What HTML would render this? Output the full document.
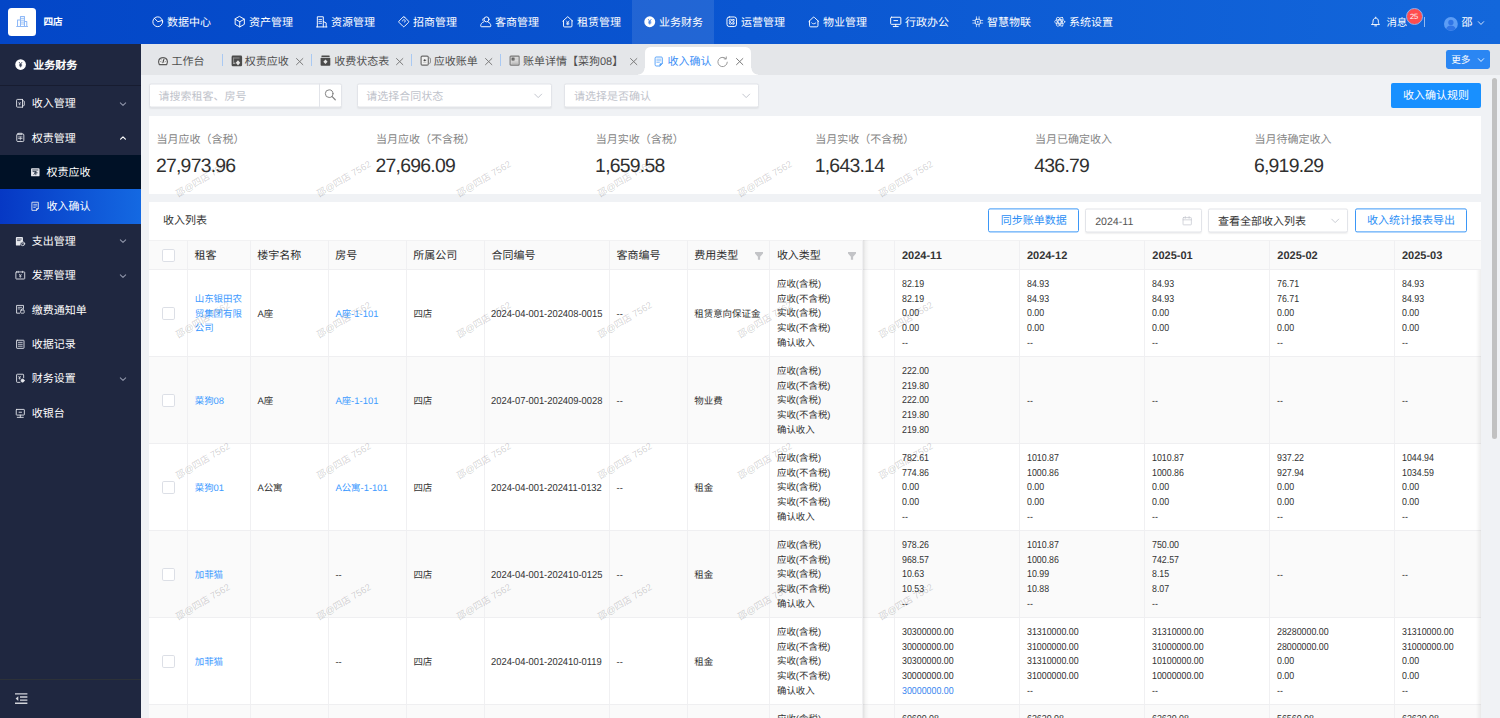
<!DOCTYPE html>
<html lang="zh-CN"><head><meta charset="utf-8"><title>收入确认</title>
<style>
*{box-sizing:border-box;margin:0;padding:0}
html,body{width:1500px;height:718px;overflow:hidden}
body{position:relative;background:#f0f2f5;font-family:"Liberation Sans",sans-serif;font-size:11px;color:#333;text-rendering:geometricPrecision}
svg{display:block;overflow:visible}
.abs{position:absolute}
#hd{position:absolute;left:0;top:0;width:1500px;height:44px;background:linear-gradient(90deg,#0346c7 0%,#0a56d1 50%,#1367db 100%);color:#fff}
#logo{position:absolute;left:8px;top:8px;width:28px;height:28px;background:#fff;border-radius:3.5px;color:#8fb9f7}
#logo svg{position:absolute;left:6.6px;top:7.1px}
#brand{position:absolute;left:43.6px;top:0;line-height:46.2px;font-size:9.6px;font-weight:bold;letter-spacing:-.2px}
.nv{position:absolute;top:0;height:44px;width:82px;line-height:46.8px;font-size:11px;white-space:nowrap}
.nv svg{position:absolute;left:12.3px;top:16.1px}
.nv span{position:absolute;left:27.2px;top:0}
.nv.on{background:rgba(255,255,255,.1)}
#sb{position:absolute;left:0;top:44px;width:140.8px;height:674px;background:#1f2740;color:#fff}
#sbt{position:absolute;left:0;top:0;width:100%;height:41.5px;border-bottom:1px solid #171c30;font-weight:bold;line-height:44.5px}
#sbt svg{position:absolute;left:14.8px;top:15.4px}
#sbt span{position:absolute;left:33.2px}
.mi{position:absolute;left:0;width:100%;height:34.4px;line-height:37.4px;white-space:nowrap}
.mi svg.i{position:absolute;left:14.8px;top:11.8px;color:#e6e8ee}
.mi span{position:absolute;left:31.8px;top:0}
.mi svg.cv{position:absolute;left:119.4px;top:13.4px;color:#8f95a9;stroke-width:1.600}
.mi.sub{background:#001126}
.mi.sub svg.i{left:30px}
.mi.sub span{left:46.6px}
.mi.act{background:linear-gradient(90deg,#0638c4 0%,#1469e2 100%)}
#sbf{position:absolute;left:0;top:635.3px;width:100%;height:40px;border-top:1px solid #2c3138}
#sbf svg{position:absolute;left:15px;top:12.7px;color:#d2d4da}
#tabs{position:absolute;left:140.8px;top:44px;width:1359.2px;height:30.8px;background:#e4e6e9;color:#505050}
.tb{position:absolute;top:0;height:30.8px;line-height:37.9px;white-space:nowrap;font-size:11px}
.tb svg{position:absolute}
.sep{position:absolute;top:9.8px;width:1px;height:12.4px;background:#a9c9f3}
#tabact{position:absolute;left:504px;top:2.9px;width:106.3px;height:27.9px;background:#fff;border-radius:5.5px 5.5px 0 0}
#tabact:before,#tabact:after{content:"";position:absolute;bottom:0;width:6.5px;height:6.5px}
#tabact:before{left:-6.5px;background:radial-gradient(circle at 0 0,rgba(255,255,255,0) 6.1px,#fff 6.9px)}
#tabact:after{right:-6.5px;background:radial-gradient(circle at 100% 0,rgba(255,255,255,0) 6.1px,#fff 6.9px)}
#more{position:absolute;left:1446px;top:50.2px;width:44px;height:18.6px;background:#2a86f3;border-radius:2.4px;color:#fff;font-size:9.6px;line-height:22.6px}
#more span{position:absolute;left:5.2px;top:0}
#more svg{position:absolute;left:30.8px;top:5.6px}
.inp{position:absolute;top:83px;height:24px;transform:translateY(.5px);background:#fff;border:1px solid #e2e4e9;border-radius:2px;box-shadow:0 1px 1.5px rgba(0,0,0,.06);line-height:24.8px;font-size:11px;color:#bfc3cb;white-space:nowrap}
.inp span{position:absolute;left:8.6px;top:0}
.inp svg{position:absolute;color:#b9bdc6}
.btnp{position:absolute;background:#1890ff;color:#fff;border-radius:2px;text-align:center;white-space:nowrap;font-size:11px}
.btno{position:absolute;background:#fff;color:#2b8ef5;border:1px solid #3b97f7;border-radius:2px;text-align:center;white-space:nowrap;font-size:11px;line-height:24.8px;height:24px;top:208px;transform:translateY(.4px)}
.card{position:absolute;left:148.8px;width:1332.4px;background:#fff}
.st{position:absolute;top:0}
.st .l{position:absolute;left:0;top:17.4px;font-size:11px;color:#858585;white-space:nowrap;line-height:14px}
.st .v{position:absolute;left:-.6px;top:38.5px;font-size:19.4px;color:#303030;white-space:nowrap;line-height:24px;letter-spacing:-.75px}
#tbl{position:absolute;left:148.8px;top:239.5px;width:1332.4px;height:480px;overflow:hidden;font-size:9.45px;color:#333}
.r{position:absolute;left:0;width:1332.4px;height:87px;background:#fff}
.r.s{background:#fafafa}
.r.h{height:30.4px;background:#fafafa;font-size:11px;font-weight:500;color:#2e2e2e}
.r.h .c.d{font-weight:bold;color:#333;padding-left:6.8px}
.c{position:absolute;top:0;height:100%;border-right:1px solid #f0f0f2;border-bottom:1px solid #efeff1;white-space:nowrap}
.r.h .c{line-height:30.2px;padding-left:6.4px;border-bottom-color:#efeff1;border-top:1px solid #f2f2f3}
.c .m{position:absolute;left:6.5px;top:calc(50% + 2px);transform:translateY(-50%);line-height:14.7px}
.c .m.n{font-size:10.1px;top:calc(50% + 2px);left:6.8px;letter-spacing:0;transform:translateY(-50%) scaleX(.875);transform-origin:0 50%}
.c a{color:#3d9aff;text-decoration:none}
.cb{position:absolute;left:13.6px;width:12.7px;height:12.7px;border:1px solid #dcdfe6;border-radius:1.8px;background:#fff}
.fi{position:absolute;top:11.3px;color:#c3c4c7}
#fx{position:absolute;left:714.5px;top:0;width:6px;height:480px;background:linear-gradient(90deg,rgba(0,0,0,.10),rgba(0,0,0,.03) 45%,rgba(0,0,0,0))}
#fr{position:absolute;left:1327.4px;top:30.4px;width:5px;height:450px;background:linear-gradient(90deg,rgba(0,0,0,0),rgba(0,0,0,.07))}
.wm{position:absolute;width:70px;height:12px;margin:-6px 0 0 -35px;text-align:center;line-height:12px;font-size:9.4px;color:rgba(40,40,45,.21);transform:rotate(-31deg);white-space:nowrap;pointer-events:none}
#vs{position:absolute;left:1492px;top:77.5px;width:5px;height:361.5px;background:#c1c1c1;border-radius:2.5px}
</style></head><body>

<div id="hd"><div id="logo"><svg width="14.3" height="12.6" viewBox="0 0 12 12" style="" fill="none" stroke="currentColor" stroke-width="1" stroke-linecap="round" stroke-linejoin="round"><path d="M4.4 11V1.4h3.8V11M1.6 11V4.8h2.8M8.2 6.2h2.2V11M.8 11h10.4" stroke-width="1"/><path d="M5 3.2h2.6M5 5h2.6M5 6.8h2.6M5 8.6h2.6" stroke-width=".8"/></svg></div><div id="brand">四店</div>
<div class="nv" style="left:139.8px"><svg width="11.5" height="11.5" viewBox="0 0 12 12" style="" fill="none" stroke="currentColor" stroke-width="1" stroke-linecap="round" stroke-linejoin="round"><circle cx="6" cy="6" r="5.1"/><path d="M2.5 2.3L6 6l4.9-1.4"/></svg><span>数据中心</span></div>
<div class="nv" style="left:221.8px"><svg width="11.5" height="11.5" viewBox="0 0 12 12" style="" fill="none" stroke="currentColor" stroke-width="1" stroke-linecap="round" stroke-linejoin="round"><path d="M6 .6l4.8 2.7v5.4L6 11.4 1.2 8.7V3.3z"/><path d="M1.2 3.3L6 6l4.8-2.7M6 6v5.4"/></svg><span>资产管理</span></div>
<div class="nv" style="left:303.8px"><svg width="11.5" height="11.5" viewBox="0 0 12 12" style="" fill="none" stroke="currentColor" stroke-width="1" stroke-linecap="round" stroke-linejoin="round"><path d="M1.4 11.4V.8h6.2v10.6M7.6 5.8l3 1.4v4.2M.6 11.4h10.8"/><path d="M3 3.6h2.8M3 5.6h2.8M3 7.6h2.8" stroke-width=".9"/></svg><span>资源管理</span></div>
<div class="nv" style="left:385.8px"><svg width="11.5" height="11.5" viewBox="0 0 12 12" style="" fill="none" stroke="currentColor" stroke-width="1" stroke-linecap="round" stroke-linejoin="round"><path d="M6.7 1.1l4.2 4.2a1 1 0 0 1 0 1.4L6.7 10.9a1 1 0 0 1-1.4 0L1.1 6.7a1 1 0 0 1 0-1.4L5.3 1.1a1 1 0 0 1 1.4 0z"/><path d="M4.6 5.2c.3-1.4 1.8-1.7 2.6-.9.800.8.400 2-.6 2.2" stroke-width=".9"/></svg><span>招商管理</span></div>
<div class="nv" style="left:467.8px"><svg width="11.5" height="11.5" viewBox="0 0 12 12" style="" fill="none" stroke="currentColor" stroke-width="1" stroke-linecap="round" stroke-linejoin="round"><circle cx="6.8" cy="3.5" r="2.6"/><path d="M3.6 6.3C1.8 6.9.8 8.2.7 10.3c0 .6.300.9.900.9h8.8c.6 0 .9-.3.900-.9-.1-2-1.1-3.4-2.9-4"/><path d="M3.4 2.6c-.8.600-.9 2 .1 2.8" stroke-width=".9"/></svg><span>客商管理</span></div>
<div class="nv" style="left:549.8px"><svg width="11.5" height="11.5" viewBox="0 0 12 12" style="" fill="none" stroke="currentColor" stroke-width="1" stroke-linecap="round" stroke-linejoin="round"><path d="M.9 5.3L6 .7l5.1 4.6M1.6 4.8v5.6a1 1 0 0 0 1 1h6.8a1 1 0 0 0 1-1V4.8"/><path d="M4.7 5.2L6 6.8l1.3-1.6M6 6.8v2.4M4.8 7.4h2.4M4.8 8.4h2.4" stroke-width=".8"/></svg><span>租赁管理</span></div>
<div class="nv on" style="left:631.8px"><svg width="11.5" height="11.5" viewBox="0 0 12 12" style="" fill="none" stroke="currentColor" stroke-width="1" stroke-linecap="round" stroke-linejoin="round"><circle cx="6" cy="6" r="5.7" fill="currentColor" stroke="none"/><path d="M4.6 3.6L6 5.6l1.4-2M6 5.6v2.9M4.8 6.2h2.4M4.8 7.3h2.4" stroke="#2b6fe0" stroke-width=".8"/></svg><span>业务财务</span></div>
<div class="nv" style="left:713.8px"><svg width="11.5" height="11.5" viewBox="0 0 12 12" style="" fill="none" stroke="currentColor" stroke-width="1" stroke-linecap="round" stroke-linejoin="round"><rect x="1" y="1" width="10" height="10" rx="2.4"/><ellipse cx="6" cy="6" rx="3.3" ry="1.5" transform="rotate(45 6 6)" stroke-width=".8"/><ellipse cx="6" cy="6" rx="3.3" ry="1.5" transform="rotate(-45 6 6)" stroke-width=".8"/></svg><span>运营管理</span></div>
<div class="nv" style="left:795.8px"><svg width="11.5" height="11.5" viewBox="0 0 12 12" style="" fill="none" stroke="currentColor" stroke-width="1" stroke-linecap="round" stroke-linejoin="round"><path d="M.9 5.7L5.3 1.5a1 1 0 0 1 1.4 0l4.4 4.2M1.6 5.2v4.9a1.2 1.2 0 0 0 1.2 1.2h6.4a1.2 1.2 0 0 0 1.2-1.2V5.2"/><path d="M3.8 7.2c1 1.4 3.4 1.4 4.4 0" stroke-width=".9"/></svg><span>物业管理</span></div>
<div class="nv" style="left:877.8px"><svg width="11.5" height="11.5" viewBox="0 0 12 12" style="" fill="none" stroke="currentColor" stroke-width="1" stroke-linecap="round" stroke-linejoin="round"><rect x=".7" y="1.3" width="10.6" height="7.4" rx=".8"/><path d="M6 8.7v2M3.4 11h5.2M4 4.8h4"/></svg><span>行政办公</span></div>
<div class="nv" style="left:959.8px"><svg width="11.5" height="11.5" viewBox="0 0 12 12" style="" fill="none" stroke="currentColor" stroke-width="1" stroke-linecap="round" stroke-linejoin="round"><rect x="3.4" y="3.4" width="5.2" height="5.2" rx="1.2" stroke-width=".9"/><circle cx="6" cy="6" r=".9" fill="currentColor" stroke="none"/><path d="M4.6.8v2.4M7.4.8v2.4M4.6 8.8v2.4M7.4 8.8v2.4M.8 4.6h2.4M.8 7.4h2.4M8.8 4.6h2.4M8.8 7.4h2.4" stroke-width=".7"/></svg><span>智慧物联</span></div>
<div class="nv" style="left:1041.8px"><svg width="11.5" height="11.5" viewBox="0 0 12 12" style="" fill="none" stroke="currentColor" stroke-width="1" stroke-linecap="round" stroke-linejoin="round"><circle cx="6" cy="6" r="1.7" stroke-width=".8"/><ellipse cx="6" cy="6" rx="5.3" ry="2.3" stroke-width=".7"/><ellipse cx="6" cy="6" rx="5.3" ry="2.3" transform="rotate(60 6 6)" stroke-width=".7"/><ellipse cx="6" cy="6" rx="5.3" ry="2.3" transform="rotate(-60 6 6)" stroke-width=".7"/></svg><span>系统设置</span></div>
<div class="abs" style="left:1369.6px;top:16.2px"><svg width="11.4" height="11.4" viewBox="0 0 12 12" style="" fill="none" stroke="currentColor" stroke-width="1" stroke-linecap="round" stroke-linejoin="round"><path d="M2 9h8c-.9-.8-1.2-1.7-1.2-3.6C8.8 3.4 7.6 2.2 6 2.2S3.2 3.4 3.2 5.4C3.2 7.3 2.9 8.2 2 9z"/><path d="M5 10.4h2M6 1.2v1"/></svg></div>
<div class="abs" style="left:1386.4px;top:0;line-height:47px;font-size:10.4px;white-space:nowrap">消息</div>
<div class="abs" style="left:1405.6px;top:8.4px;width:17px;height:17px;border-radius:50%;background:#ff4d4f;border:1.4px solid #8ab2f0;font-size:7.6px;line-height:15.6px;text-align:center;letter-spacing:-.2px">25</div>
<div class="abs" style="left:1424px;top:17.2px;width:1px;height:10px;background:rgba(255,255,255,.55)"></div>
<div class="abs" style="left:1443.7px;top:16.5px"><svg width="13.8" height="13.8" viewBox="0 0 12 12" style="" fill="none" stroke="currentColor" stroke-width="1" stroke-linecap="round" stroke-linejoin="round"><circle cx="6" cy="6" r="6" fill="#5d9df5" stroke="none"/><circle cx="6" cy="4.7" r="2.3" fill="#2f74e6" stroke="none"/><path d="M1.9 10.2c.6-2 2.2-2.8 4.1-2.8s3.5.8 4.1 2.8A6 6 0 0 1 1.9 10.2z" fill="#2f74e6" stroke="none"/></svg></div>
<div class="abs" style="left:1461.4px;top:0;line-height:47.6px;font-size:11px">邵</div>
<div class="abs" style="left:1476.8px;top:18.6px"><svg width="8" height="8" viewBox="0 0 12 12" style="" fill="none" stroke="currentColor" stroke-width="1" stroke-linecap="round" stroke-linejoin="round"><path d="M2 4l4 4.2 4-4.2" stroke-width="1.2"/></svg></div>
</div>
<div id="sb"><div id="sbt"><svg width="11.2" height="11.2" viewBox="0 0 12 12" style="" fill="none" stroke="currentColor" stroke-width="1" stroke-linecap="round" stroke-linejoin="round"><circle cx="6" cy="6" r="5.7" fill="currentColor" stroke="none"/><path d="M4.6 3.6L6 5.6l1.4-2M6 5.6v2.9M4.8 6.2h2.4M4.8 7.3h2.4" stroke="#1f2740" stroke-width=".8"/></svg><span>业务财务</span></div>
<div class="mi " style="top:42.2px"><svg class="i" width="10.6" height="10.6" viewBox="0 0 12 12" style="" fill="none" stroke="currentColor" stroke-width="1" stroke-linecap="round" stroke-linejoin="round"><path d="M8.5 1.6H2.8a1 1 0 0 0-1 1v6.8a1 1 0 0 0 1 1h5.7M8.5 1.6v8.8M8.5 3.2h1.2a.8.800 0 0 1 .8.800v4a.8.800 0 0 1-.8.800H8.5"/><path d="M4.2 5l1 1.2 1-1.2M5.2 6.2v1.6M4.4 6.8h1.6" stroke-width=".7"/></svg><span>收入管理</span><svg class="cv" width="8" height="8" viewBox="0 0 12 12" style="" fill="none" stroke="currentColor" stroke-width="1" stroke-linecap="round" stroke-linejoin="round"><path d="M2 4.2l4 4 4-4"/></svg></div>
<div class="mi " style="top:76.6px"><svg class="i" width="10.6" height="10.6" viewBox="0 0 12 12" style="" fill="none" stroke="currentColor" stroke-width="1" stroke-linecap="round" stroke-linejoin="round"><rect x="2" y="2.2" width="8" height="8.6" rx="1.2"/><path d="M4.2 1.4h3.6v1.6H4.2zM4 5.6h4M4 7.4h4M6 5.6v3.4" stroke-width=".8"/></svg><span>权责管理</span><svg class="cv" style="color:#fff" width="8" height="8" viewBox="0 0 12 12" style="" fill="none" stroke="currentColor" stroke-width="1" stroke-linecap="round" stroke-linejoin="round"><path d="M2.4 7.8L6 4.2l3.6 3.6" stroke-width="1.8"/></svg></div>
<div class="mi sub" style="top:111px"><svg class="i" width="10.6" height="10.6" viewBox="0 0 12 12" style="" fill="none" stroke="currentColor" stroke-width="1" stroke-linecap="round" stroke-linejoin="round"><rect x="1.2" y="1.4" width="9.6" height="9.2" rx="1" fill="currentColor" stroke="none"/><path d="M3 3.4h6M3.4 5.2h3.4M6.6 5.4v3.4M5.2 6.6h3M4.4 8.6l1-1.4" stroke="#001126" stroke-width=".8"/></svg><span>权责应收</span></div>
<div class="mi sub act" style="top:145.4px"><svg class="i" width="10.6" height="10.6" viewBox="0 0 12 12" style="" fill="none" stroke="currentColor" stroke-width="1" stroke-linecap="round" stroke-linejoin="round"><path d="M2.6 1.4h6.8v7.2l-2 2H2.6zM9.4 8.6h-2v2"/><path d="M4.2 3.8h3.6M4.2 5.6h3.6M4.2 7.4h1.8" stroke-width=".8"/></svg><span>收入确认</span></div>
<div class="mi " style="top:179.8px"><svg class="i" width="10.6" height="10.6" viewBox="0 0 12 12" style="" fill="none" stroke="currentColor" stroke-width="1" stroke-linecap="round" stroke-linejoin="round"><path d="M2 1.2h6a1 1 0 0 1 1 1v4.2a3 3 0 0 0-3 3v1.4H2a1 1 0 0 1-1-1V2.2a1 1 0 0 1 1-1z" fill="currentColor" stroke="none"/><path d="M2.8 3.4h4.4M2.8 5.2h3" stroke="#1f2740" stroke-width=".8"/><circle cx="8.8" cy="8.8" r="2.2" stroke-width=".9"/><path d="M8.8 7.8v1.2h.9" stroke-width=".7"/></svg><span>支出管理</span><svg class="cv" width="8" height="8" viewBox="0 0 12 12" style="" fill="none" stroke="currentColor" stroke-width="1" stroke-linecap="round" stroke-linejoin="round"><path d="M2 4.2l4 4 4-4"/></svg></div>
<div class="mi " style="top:214.2px"><svg class="i" width="10.6" height="10.6" viewBox="0 0 12 12" style="" fill="none" stroke="currentColor" stroke-width="1" stroke-linecap="round" stroke-linejoin="round"><rect x="1" y="2.2" width="10" height="8" rx=".6"/><path d="M3.6 1.4v1.6M8.4 1.4v1.6M4.8 4.8L6 6.2l1.2-1.4M6 6.2v2.2M5 7h2" stroke-width=".8"/></svg><span>发票管理</span><svg class="cv" width="8" height="8" viewBox="0 0 12 12" style="" fill="none" stroke="currentColor" stroke-width="1" stroke-linecap="round" stroke-linejoin="round"><path d="M2 4.2l4 4 4-4"/></svg></div>
<div class="mi " style="top:248.6px"><svg class="i" width="10.6" height="10.6" viewBox="0 0 12 12" style="" fill="none" stroke="currentColor" stroke-width="1" stroke-linecap="round" stroke-linejoin="round"><path d="M9.6 5V1.6H1.8v8.8h3.4"/><path d="M3.6 3.8h4M3.6 5.6h2" stroke-width=".8"/><rect x="6.4" y="6.8" width="4" height="3.6" rx=".6" stroke-width=".9"/><path d="M7.4 6.8v-.6a1 1 0 0 1 2 0v.6" stroke-width=".8"/></svg><span>缴费通知单</span></div>
<div class="mi " style="top:283px"><svg class="i" width="10.6" height="10.6" viewBox="0 0 12 12" style="" fill="none" stroke="currentColor" stroke-width="1" stroke-linecap="round" stroke-linejoin="round"><rect x="1.8" y="1.4" width="8.4" height="9.2" rx=".6"/><path d="M3.8 3.8h4.4M3.8 6h4.4M3.8 8.2h4.4" stroke-width=".9"/></svg><span>收据记录</span></div>
<div class="mi " style="top:317.4px"><svg class="i" width="10.6" height="10.6" viewBox="0 0 12 12" style="" fill="none" stroke="currentColor" stroke-width="1" stroke-linecap="round" stroke-linejoin="round"><path d="M9.8 5.4V2.2a.8.800 0 0 0-.8-.8H2.6a.8.800 0 0 0-.8.800v7.6a.8.800 0 0 0 .8.800h3"/><path d="M4 3.6l1.2 1.4 1.2-1.4M5.2 5v2M4.2 5.8h2" stroke-width=".8"/><circle cx="8.6" cy="8.6" r="1.8" fill="currentColor" stroke-width=".8"/></svg><span>财务设置</span><svg class="cv" width="8" height="8" viewBox="0 0 12 12" style="" fill="none" stroke="currentColor" stroke-width="1" stroke-linecap="round" stroke-linejoin="round"><path d="M2 4.2l4 4 4-4"/></svg></div>
<div class="mi " style="top:351.8px"><svg class="i" width="10.6" height="10.6" viewBox="0 0 12 12" style="" fill="none" stroke="currentColor" stroke-width="1" stroke-linecap="round" stroke-linejoin="round"><rect x="1.4" y="1.6" width="9.2" height="6.4" rx=".5"/><path d="M4.6 4.8h2.8M6 8v2.4M2.6 10.6h6.8" /></svg><span>收银台</span></div>
<div id="sbf"><svg width="12.4" height="11" viewBox="0 0 12.4 11" style="" fill="none" stroke="currentColor" stroke-width="1" stroke-linecap="round" stroke-linejoin="round"><path d="M0 .8h12.4M5 4h7.4M5 7.1h7.4M0 10.3h12.4" stroke-width="1.35" stroke-linecap="butt"/><path d="M3.3 3.3v4.6L.6 5.6z" fill="currentColor" stroke="none"/></svg></div></div>
<div id="tabs"><div id="tabact"></div>
<div class="tb" style="left:0;"><svg width="12" height="12" viewBox="0 0 12 12" style="left:16.3px;top:11px" fill="none" stroke="currentColor" stroke-width="1" stroke-linecap="round" stroke-linejoin="round"><path d="M2.3 9.5C.7 6.6 1.7 2.5 6 2.5s5.3 4.1 3.7 7z" fill="#f3f3f3" stroke="#5a5a5a" stroke-width="1.25"/><path d="M5.9 7.7l1-3.3" stroke="#444" stroke-width="1.1"/><path d="M3.4 6.6l.9.300M8.6 6.6l-.7.300M4.3 4.6l.5.600" stroke="#777" stroke-width=".7"/></svg><span style="position:absolute;left:30.8px;top:0">工作台</span></div>
<div class="tb" style="left:0;"><svg width="12" height="12" viewBox="0 0 12 12" style="left:90.3px;top:10.8px" fill="none" stroke="currentColor" stroke-width="1" stroke-linecap="round" stroke-linejoin="round"><rect x=".6" y=".6" width="10.5" height="10.7" rx="1.3" fill="#4b4b4b" stroke="none"/><path d="M2.6 3h5.6M2.6 3v4.2" stroke="#9a9a9a" stroke-width=".9"/><path d="M2.4 8.2h1.6" stroke="#ddd" stroke-width=".9"/><path d="M7 5.2l2.2 2.6L7 10.4 4.8 7.8z" fill="#e6e6e6" stroke="none"/></svg><span style="position:absolute;left:104px;top:0">权责应收</span><svg width="7.4" height="7.2" viewBox="0 0 7.4 7.2" style="left:155.6px;top:13.5px;color:#7a7a7a" fill="none" stroke="currentColor" stroke-width="1" stroke-linecap="round" stroke-linejoin="round"><path d="M.5 .5l6.4 6.2M6.9 .5L.5 6.7" stroke-width="1"/></svg></div>
<div class="tb" style="left:0;"><svg width="12" height="12" viewBox="0 0 12 12" style="left:179.6px;top:11.4px" fill="none" stroke="currentColor" stroke-width="1" stroke-linecap="round" stroke-linejoin="round"><rect x="1.4" y=".6" width="8.3" height="1.3" rx=".4" fill="#4b4b4b" stroke="none"/><rect x=".6" y="2.7" width="9.7" height="8" rx=".8" fill="#4b4b4b" stroke="none"/><path d="M5.45 4.4l2.1 2.3-2.1 2.3-2.1-2.3z" fill="#e6e6e6" stroke="none"/></svg><span style="position:absolute;left:193.4px;top:0">收费状态表</span><svg width="7.4" height="7.2" viewBox="0 0 7.4 7.2" style="left:255.4px;top:13.5px;color:#7a7a7a" fill="none" stroke="currentColor" stroke-width="1" stroke-linecap="round" stroke-linejoin="round"><path d="M.5 .5l6.4 6.2M6.9 .5L.5 6.7" stroke-width="1"/></svg></div>
<div class="tb" style="left:0;"><svg width="12" height="12" viewBox="0 0 12 12" style="left:279.6px;top:11.4px" fill="none" stroke="currentColor" stroke-width="1" stroke-linecap="round" stroke-linejoin="round"><rect x="1.1" y="1.1" width="7.2" height="9" rx="1.2" fill="#f1f1f1" stroke="#6a6a6a" stroke-width="1.15"/><path d="M8.8 2.9h.7a1 1 0 0 1 1 1v3.4a1 1 0 0 1-1 1h-.7" stroke="#8a8a8a" stroke-width=".9"/><path d="M3.2 5.2l1.7-1.3v.9h1.3v.9H4.9v.8z" fill="#444" stroke="none"/><path d="M3.6 7.3h2.4" stroke="#aaa" stroke-width=".7"/></svg><span style="position:absolute;left:293px;top:0">应收账单</span><svg width="7.4" height="7.2" viewBox="0 0 7.4 7.2" style="left:344.4px;top:13.5px;color:#7a7a7a" fill="none" stroke="currentColor" stroke-width="1" stroke-linecap="round" stroke-linejoin="round"><path d="M.5 .5l6.4 6.2M6.9 .5L.5 6.7" stroke-width="1"/></svg></div>
<div class="tb" style="left:0;"><svg width="12" height="12" viewBox="0 0 12 12" style="left:368.6px;top:11.4px" fill="none" stroke="currentColor" stroke-width="1" stroke-linecap="round" stroke-linejoin="round"><rect x="1.1" y="1.1" width="9" height="9" rx=".7" fill="#e0e0e0" stroke="#777" stroke-width="1.1"/><rect x="2.6" y="2.6" width="2.9" height="2.9" fill="#444" stroke="none"/><rect x="3.6" y="3.6" width=".9" height=".9" fill="#fff" stroke="none"/><path d="M6.4 3.2h2.4M6.4 4.8h2.4" stroke="#c4c4c4" stroke-width=".7"/><path d="M2.8 7.1h6M2.8 8.6h6" stroke="#aaa" stroke-width=".7"/></svg><span style="position:absolute;left:382.2px;top:0">账单详情【菜狗08】</span><svg width="7.4" height="7.2" viewBox="0 0 7.4 7.2" style="left:489px;top:13.5px;color:#7a7a7a" fill="none" stroke="currentColor" stroke-width="1" stroke-linecap="round" stroke-linejoin="round"><path d="M.5 .5l6.4 6.2M6.9 .5L.5 6.7" stroke-width="1"/></svg></div>
<div class="tb" style="left:0;color:#3d8ff6;"><svg width="12" height="12" viewBox="0 0 12 12" style="left:513.6px;top:11.7px" fill="none" stroke="currentColor" stroke-width="1" stroke-linecap="round" stroke-linejoin="round"><path d="M1.1 2a1 1 0 0 1 1-1h5.2a1 1 0 0 1 1 1v5.6L5.9 10H2.1a1 1 0 0 1-1-1z" stroke="#4c9cf8" stroke-width=".9"/><path d="M8.2 7.4H6.6a.8.800 0 0 0-.8.800v1.8z" fill="#4c9cf8" stroke="#4c9cf8" stroke-width=".4"/><path d="M2.8 3.2h4M2.8 4.8h4M2.8 6.4h2.6" stroke="#7ab5fa" stroke-width=".8"/></svg><span style="position:absolute;left:526.7px;top:0">收入确认</span><svg width="7.4" height="7.2" viewBox="0 0 7.4 7.2" style="left:595.5px;top:13.5px;color:#7a7a7a" fill="none" stroke="currentColor" stroke-width="1" stroke-linecap="round" stroke-linejoin="round"><path d="M.5 .5l6.4 6.2M6.9 .5L.5 6.7" stroke-width="1"/></svg></div>
<svg width="12" height="12" viewBox="0 0 12 12" style="position:absolute;left:575.9px;top:11.6px;color:#9a9a9a" fill="none" stroke="currentColor" stroke-width="1" stroke-linecap="round" stroke-linejoin="round"><path d="M10.3 6.2a4.7 4.7 0 1 1-1.5-3.7" stroke-width="1"/><path d="M9.3.9l-.1 2.2-2.1-.3" stroke-width="1"/></svg>
<div class="sep" style="left:81px"></div>
<div class="sep" style="left:170.2px"></div>
<div class="sep" style="left:270.2px"></div>
<div class="sep" style="left:359.3px"></div>
</div>
<div id="more"><span>更多</span><svg width="8" height="8" viewBox="0 0 12 12" style="" fill="none" stroke="currentColor" stroke-width="1" stroke-linecap="round" stroke-linejoin="round"><path d="M2 4l4 4.2 4-4.2" stroke-width="1.3"/></svg></div>
<div class="inp" style="left:148.8px;width:193.6px"><span>请搜索租客、房号</span><div class="abs" style="left:168.8px;top:-1px;width:1px;height:24px;background:#e2e4e9"></div><svg width="12.4" height="12.4" viewBox="0 0 12 12" style="left:174.5px;top:4.4px;color:#828282" fill="none" stroke="currentColor" stroke-width="1" stroke-linecap="round" stroke-linejoin="round"><circle cx="5" cy="5" r="3.7" stroke-width=".95"/><path d="M7.7 7.7l3.2 3.2" stroke-width="1.15"/></svg></div>
<div class="inp" style="left:356.6px;width:195.2px"><span>请选择合同状态</span><svg width="10.4" height="10.4" viewBox="0 0 12 12" style="left:175.6px;top:6.2px" fill="none" stroke="currentColor" stroke-width="1" stroke-linecap="round" stroke-linejoin="round"><path d="M2 4.2l4 4 4-4"/></svg></div>
<div class="inp" style="left:564.3px;width:195.2px"><span>请选择是否确认</span><svg width="10.4" height="10.4" viewBox="0 0 12 12" style="left:175.6px;top:6.2px" fill="none" stroke="currentColor" stroke-width="1" stroke-linecap="round" stroke-linejoin="round"><path d="M2 4.2l4 4 4-4"/></svg></div>
<div class="btnp" style="left:1390.8px;top:83px;width:90.4px;height:24.7px;line-height:27.7px">收入确认规则</div>
<div class="card" style="top:115.5px;height:78px">
<div class="st" style="left:7.7px"><div class="l">当月应收（含税）</div><div class="v">27,973.96</div></div>
<div class="st" style="left:227.3px"><div class="l">当月应收（不含税）</div><div class="v">27,696.09</div></div>
<div class="st" style="left:446.9px"><div class="l">当月实收（含税）</div><div class="v">1,659.58</div></div>
<div class="st" style="left:666.5px"><div class="l">当月实收（不含税）</div><div class="v">1,643.14</div></div>
<div class="st" style="left:886.1px"><div class="l">当月已确定收入</div><div class="v">436.79</div></div>
<div class="st" style="left:1105.7px"><div class="l">当月待确定收入</div><div class="v">6,919.29</div></div>
</div>
<div class="card" style="top:201.5px;height:520px"><div class="abs" style="left:14.2px;top:11.3px;line-height:16px;color:#333;white-space:nowrap">收入列表</div></div>
<div class="btno" style="left:988.4px;width:90.6px">同步账单数据</div>
<div class="inp" style="left:1085.4px;top:208px;width:116.2px;height:24px;color:#555"><span style="left:8.8px;font-size:10.6px">2024-11</span><svg width="10.4" height="10.4" viewBox="0 0 12 12" style="left:95.6px;top:6px;color:#c0c4cc" fill="none" stroke="currentColor" stroke-width="1" stroke-linecap="round" stroke-linejoin="round"><rect x="1.2" y="2.4" width="9.6" height="8.4" rx=".6" stroke-width=".8"/><path d="M1.2 5h9.6M3.8 1.2v2M8.2 1.2v2" stroke-width=".8"/></svg></div>
<div class="inp" style="left:1208.4px;top:208px;width:139.8px;height:24px;color:#333"><span>查看全部收入列表</span><svg width="10.4" height="10.4" viewBox="0 0 12 12" style="left:121px;top:6.4px;color:#c0c4cc" fill="none" stroke="currentColor" stroke-width="1" stroke-linecap="round" stroke-linejoin="round"><path d="M2 4.2l4 4 4-4"/></svg></div>
<div class="btno" style="left:1354.8px;width:112.6px">收入统计报表导出</div>
<div id="tbl">
<div class="r h" style="top:0"><div class="c" style="left:0px;width:39.4px;padding-left:0"><div class="cb" style="top:8.6px"></div></div><div class="c" style="left:39.4px;width:62.7px;">租客</div><div class="c" style="left:102.1px;width:78px;">楼宇名称</div><div class="c" style="left:180.1px;width:78px;">房号</div><div class="c" style="left:258.1px;width:78.3px;">所属公司</div><div class="c" style="left:336.4px;width:124.9px;">合同编号</div><div class="c" style="left:461.3px;width:77.7px;">客商编号</div><div class="c" style="left:539px;width:82.7px;">费用类型<svg class="fi" style="left:66.9px" width="8" height="7.8" viewBox="0 0 8 7.8" style="" fill="none" stroke="currentColor" stroke-width="1" stroke-linecap="round" stroke-linejoin="round"><path d="M0 0h8v1.6L5.1 4.7v3.1H2.9V4.7L0 1.6z" fill="currentColor" stroke="none"/></svg></div><div class="c" style="left:621.7px;width:92.9px;">收入类型<svg class="fi" style="left:77.9px" width="8" height="7.8" viewBox="0 0 8 7.8" style="" fill="none" stroke="currentColor" stroke-width="1" stroke-linecap="round" stroke-linejoin="round"><path d="M0 0h8v1.6L5.1 4.7v3.1H2.9V4.7L0 1.6z" fill="currentColor" stroke="none"/></svg></div><div class="c" style="left:714.6px;width:31.8px;"></div><div class="c d" style="left:746.4px;width:124.9px;">2024-11</div><div class="c d" style="left:871.3px;width:125.4px;">2024-12</div><div class="c d" style="left:996.7px;width:125px;">2025-01</div><div class="c d" style="left:1121.7px;width:124.7px;">2025-02</div><div class="c d" style="left:1246.4px;width:125px;">2025-03</div></div>
<div class="r" style="top:30.4px"><div class="c" style="left:0px;width:39.4px;"><div class="cb" style="top:37.2px"></div></div><div class="c" style="left:39.4px;width:62.7px;"><div class="m"><a>山东银田农<br>贸集团有限<br>公司</a></div></div><div class="c" style="left:102.1px;width:78px;"><div class="m">A座</div></div><div class="c" style="left:180.1px;width:78px;"><div class="m"><a>A座-1-101</a></div></div><div class="c" style="left:258.1px;width:78.3px;"><div class="m">四店</div></div><div class="c" style="left:336.4px;width:124.9px;"><div class="m n" style="left:6.1px;transform:translateY(-50%) scaleX(.928)">2024-04-001-202408-0015</div></div><div class="c" style="left:461.3px;width:77.7px;"><div class="m">--</div></div><div class="c" style="left:539px;width:82.7px;"><div class="m">租赁意向保证金</div></div><div class="c" style="left:621.7px;width:92.9px;"><div class="m">应收(含税)<br>应收(不含税)<br>实收(含税)<br>实收(不含税)<br>确认收入</div></div><div class="c" style="left:714.6px;width:31.8px;"></div><div class="c" style="left:746.4px;width:124.9px;"><div class="m n">82.19<br>82.19<br>0.00<br>0.00<br>--</div></div><div class="c" style="left:871.3px;width:125.4px;"><div class="m n">84.93<br>84.93<br>0.00<br>0.00<br>--</div></div><div class="c" style="left:996.7px;width:125px;"><div class="m n">84.93<br>84.93<br>0.00<br>0.00<br>--</div></div><div class="c" style="left:1121.7px;width:124.7px;"><div class="m n">76.71<br>76.71<br>0.00<br>0.00<br>--</div></div><div class="c" style="left:1246.4px;width:125px;"><div class="m n">84.93<br>84.93<br>0.00<br>0.00<br>--</div></div></div>
<div class="r s" style="top:117.4px"><div class="c" style="left:0px;width:39.4px;"><div class="cb" style="top:37.2px"></div></div><div class="c" style="left:39.4px;width:62.7px;"><div class="m"><a>菜狗08</a></div></div><div class="c" style="left:102.1px;width:78px;"><div class="m">A座</div></div><div class="c" style="left:180.1px;width:78px;"><div class="m"><a>A座-1-101</a></div></div><div class="c" style="left:258.1px;width:78.3px;"><div class="m">四店</div></div><div class="c" style="left:336.4px;width:124.9px;"><div class="m n" style="left:6.1px;transform:translateY(-50%) scaleX(.928)">2024-07-001-202409-0028</div></div><div class="c" style="left:461.3px;width:77.7px;"><div class="m">--</div></div><div class="c" style="left:539px;width:82.7px;"><div class="m">物业费</div></div><div class="c" style="left:621.7px;width:92.9px;"><div class="m">应收(含税)<br>应收(不含税)<br>实收(含税)<br>实收(不含税)<br>确认收入</div></div><div class="c" style="left:714.6px;width:31.8px;"></div><div class="c" style="left:746.4px;width:124.9px;"><div class="m n">222.00<br>219.80<br>222.00<br>219.80<br>219.80</div></div><div class="c" style="left:871.3px;width:125.4px;"><div class="m n">--</div></div><div class="c" style="left:996.7px;width:125px;"><div class="m n">--</div></div><div class="c" style="left:1121.7px;width:124.7px;"><div class="m n">--</div></div><div class="c" style="left:1246.4px;width:125px;"><div class="m n">--</div></div></div>
<div class="r" style="top:204.4px"><div class="c" style="left:0px;width:39.4px;"><div class="cb" style="top:37.2px"></div></div><div class="c" style="left:39.4px;width:62.7px;"><div class="m"><a>菜狗01</a></div></div><div class="c" style="left:102.1px;width:78px;"><div class="m">A公寓</div></div><div class="c" style="left:180.1px;width:78px;"><div class="m"><a>A公寓-1-101</a></div></div><div class="c" style="left:258.1px;width:78.3px;"><div class="m">四店</div></div><div class="c" style="left:336.4px;width:124.9px;"><div class="m n" style="left:6.1px;transform:translateY(-50%) scaleX(.928)">2024-04-001-202411-0132</div></div><div class="c" style="left:461.3px;width:77.7px;"><div class="m">--</div></div><div class="c" style="left:539px;width:82.7px;"><div class="m">租金</div></div><div class="c" style="left:621.7px;width:92.9px;"><div class="m">应收(含税)<br>应收(不含税)<br>实收(含税)<br>实收(不含税)<br>确认收入</div></div><div class="c" style="left:714.6px;width:31.8px;"></div><div class="c" style="left:746.4px;width:124.9px;"><div class="m n">782.61<br>774.86<br>0.00<br>0.00<br>--</div></div><div class="c" style="left:871.3px;width:125.4px;"><div class="m n">1010.87<br>1000.86<br>0.00<br>0.00<br>--</div></div><div class="c" style="left:996.7px;width:125px;"><div class="m n">1010.87<br>1000.86<br>0.00<br>0.00<br>--</div></div><div class="c" style="left:1121.7px;width:124.7px;"><div class="m n">937.22<br>927.94<br>0.00<br>0.00<br>--</div></div><div class="c" style="left:1246.4px;width:125px;"><div class="m n">1044.94<br>1034.59<br>0.00<br>0.00<br>--</div></div></div>
<div class="r s" style="top:291.4px"><div class="c" style="left:0px;width:39.4px;"><div class="cb" style="top:37.2px"></div></div><div class="c" style="left:39.4px;width:62.7px;"><div class="m"><a>加菲猫</a></div></div><div class="c" style="left:102.1px;width:78px;"><div class="m"></div></div><div class="c" style="left:180.1px;width:78px;"><div class="m">--</div></div><div class="c" style="left:258.1px;width:78.3px;"><div class="m">四店</div></div><div class="c" style="left:336.4px;width:124.9px;"><div class="m n" style="left:6.1px;transform:translateY(-50%) scaleX(.928)">2024-04-001-202410-0125</div></div><div class="c" style="left:461.3px;width:77.7px;"><div class="m">--</div></div><div class="c" style="left:539px;width:82.7px;"><div class="m">租金</div></div><div class="c" style="left:621.7px;width:92.9px;"><div class="m">应收(含税)<br>应收(不含税)<br>实收(含税)<br>实收(不含税)<br>确认收入</div></div><div class="c" style="left:714.6px;width:31.8px;"></div><div class="c" style="left:746.4px;width:124.9px;"><div class="m n">978.26<br>968.57<br>10.63<br>10.53<br>--</div></div><div class="c" style="left:871.3px;width:125.4px;"><div class="m n">1010.87<br>1000.86<br>10.99<br>10.88<br>--</div></div><div class="c" style="left:996.7px;width:125px;"><div class="m n">750.00<br>742.57<br>8.15<br>8.07<br>--</div></div><div class="c" style="left:1121.7px;width:124.7px;"><div class="m n">--</div></div><div class="c" style="left:1246.4px;width:125px;"><div class="m n">--</div></div></div>
<div class="r" style="top:378.4px"><div class="c" style="left:0px;width:39.4px;"><div class="cb" style="top:37.2px"></div></div><div class="c" style="left:39.4px;width:62.7px;"><div class="m"><a>加菲猫</a></div></div><div class="c" style="left:102.1px;width:78px;"><div class="m"></div></div><div class="c" style="left:180.1px;width:78px;"><div class="m">--</div></div><div class="c" style="left:258.1px;width:78.3px;"><div class="m">四店</div></div><div class="c" style="left:336.4px;width:124.9px;"><div class="m n" style="left:6.1px;transform:translateY(-50%) scaleX(.928)">2024-04-001-202410-0119</div></div><div class="c" style="left:461.3px;width:77.7px;"><div class="m">--</div></div><div class="c" style="left:539px;width:82.7px;"><div class="m">租金</div></div><div class="c" style="left:621.7px;width:92.9px;"><div class="m">应收(含税)<br>应收(不含税)<br>实收(含税)<br>实收(不含税)<br>确认收入</div></div><div class="c" style="left:714.6px;width:31.8px;"></div><div class="c" style="left:746.4px;width:124.9px;"><div class="m n">30300000.00<br>30000000.00<br>30300000.00<br>30000000.00<br><a style="color:#3a86f0">30000000.00</a></div></div><div class="c" style="left:871.3px;width:125.4px;"><div class="m n">31310000.00<br>31000000.00<br>31310000.00<br>31000000.00<br>--</div></div><div class="c" style="left:996.7px;width:125px;"><div class="m n">31310000.00<br>31000000.00<br>10100000.00<br>10000000.00<br>--</div></div><div class="c" style="left:1121.7px;width:124.7px;"><div class="m n">28280000.00<br>28000000.00<br>0.00<br>0.00<br>--</div></div><div class="c" style="left:1246.4px;width:125px;"><div class="m n">31310000.00<br>31000000.00<br>0.00<br>0.00<br>--</div></div></div>
<div class="r s" style="top:465.4px"><div class="c" style="left:0px;width:39.4px;"><div class="cb" style="top:37.2px"></div></div><div class="c" style="left:39.4px;width:62.7px;"><div class="m"><a>加菲猫</a></div></div><div class="c" style="left:102.1px;width:78px;"><div class="m"></div></div><div class="c" style="left:180.1px;width:78px;"><div class="m">--</div></div><div class="c" style="left:258.1px;width:78.3px;"><div class="m">四店</div></div><div class="c" style="left:336.4px;width:124.9px;"><div class="m n" style="left:6.1px;transform:translateY(-50%) scaleX(.928)">2024-04-001-202410-0118</div></div><div class="c" style="left:461.3px;width:77.7px;"><div class="m">--</div></div><div class="c" style="left:539px;width:82.7px;"><div class="m">租金</div></div><div class="c" style="left:621.7px;width:92.9px;"><div class="m">应收(含税)<br>应收(不含税)<br>实收(含税)<br>实收(不含税)<br>确认收入</div></div><div class="c" style="left:714.6px;width:31.8px;"></div><div class="c" style="left:746.4px;width:124.9px;"><div class="m n">60600.08<br>60000.08<br>0.00<br>0.00<br>--</div></div><div class="c" style="left:871.3px;width:125.4px;"><div class="m n">62620.08<br>62000.08<br>0.00<br>0.00<br>--</div></div><div class="c" style="left:996.7px;width:125px;"><div class="m n">62620.08<br>62000.08<br>0.00<br>0.00<br>--</div></div><div class="c" style="left:1121.7px;width:124.7px;"><div class="m n">56560.08<br>56000.08<br>0.00<br>0.00<br>--</div></div><div class="c" style="left:1246.4px;width:125px;"><div class="m n">62620.08<br>62000.08<br>0.00<br>0.00<br>--</div></div></div>
<div id="fx"></div><div id="fr"></div></div>
<div class="wm" style="left:203px;top:179px">邵@四店 7562</div>
<div class="wm" style="left:343.6px;top:179px">邵@四店 7562</div>
<div class="wm" style="left:484.2px;top:179px">邵@四店 7562</div>
<div class="wm" style="left:624.8px;top:179px">邵@四店 7562</div>
<div class="wm" style="left:765.4px;top:179px">邵@四店 7562</div>
<div class="wm" style="left:906px;top:179px">邵@四店 7562</div>
<div class="wm" style="left:203px;top:320px">邵@四店 7562</div>
<div class="wm" style="left:343.6px;top:320px">邵@四店 7562</div>
<div class="wm" style="left:484.2px;top:320px">邵@四店 7562</div>
<div class="wm" style="left:624.8px;top:320px">邵@四店 7562</div>
<div class="wm" style="left:765.4px;top:320px">邵@四店 7562</div>
<div class="wm" style="left:906px;top:320px">邵@四店 7562</div>
<div class="wm" style="left:203px;top:461px">邵@四店 7562</div>
<div class="wm" style="left:343.6px;top:461px">邵@四店 7562</div>
<div class="wm" style="left:484.2px;top:461px">邵@四店 7562</div>
<div class="wm" style="left:624.8px;top:461px">邵@四店 7562</div>
<div class="wm" style="left:765.4px;top:461px">邵@四店 7562</div>
<div class="wm" style="left:906px;top:461px">邵@四店 7562</div>
<div class="wm" style="left:203px;top:602px">邵@四店 7562</div>
<div class="wm" style="left:343.6px;top:602px">邵@四店 7562</div>
<div class="wm" style="left:484.2px;top:602px">邵@四店 7562</div>
<div class="wm" style="left:624.8px;top:602px">邵@四店 7562</div>
<div class="wm" style="left:765.4px;top:602px">邵@四店 7562</div>
<div class="wm" style="left:906px;top:602px">邵@四店 7562</div>
<div class="wm" style="left:203px;top:743px">邵@四店 7562</div>
<div class="wm" style="left:343.6px;top:743px">邵@四店 7562</div>
<div class="wm" style="left:484.2px;top:743px">邵@四店 7562</div>
<div class="wm" style="left:624.8px;top:743px">邵@四店 7562</div>
<div class="wm" style="left:765.4px;top:743px">邵@四店 7562</div>
<div class="wm" style="left:906px;top:743px">邵@四店 7562</div>
<div id="vs"></div>
</body></html>
